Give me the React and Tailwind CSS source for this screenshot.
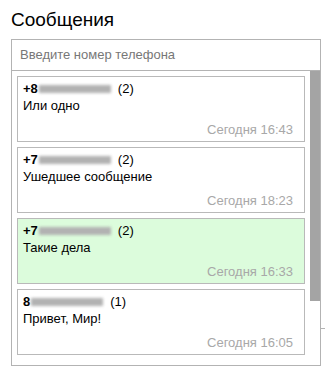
import React from "react";

const cards = [
  { prefix: "+8", count: "(2)", text: "Или одно", time: "Сегодня 16:43", green: false },
  { prefix: "+7", count: "(2)", text: "Ушедшее сообщение", time: "Сегодня 18:23", green: false },
  { prefix: "+7", count: "(2)", text: "Такие дела", time: "Сегодня 16:33", green: true },
  { prefix: "8", count: "(1)", text: "Привет, Мир!", time: "Сегодня 16:05", green: false },
];

function Card({ c }) {
  return (
    <div
      className={`h-[66px] shrink-0 border border-[#b9b9b9] pl-[5px] pr-[11px] pt-[3px] text-[13px] leading-[17px] text-black ${
        c.green ? "bg-[#dcfcdc]" : "bg-white"
      }`}
    >
      <div className="flex items-center whitespace-nowrap">
        <span className="font-bold">{c.prefix}</span>
        <span
          aria-hidden="true"
          className="ml-[1px] inline-block h-[8px] w-[72px] bg-[#b2b2b2] blur-[1.5px]"
        />
        <span className="ml-[7px]">{c.count}</span>
      </div>
      <div>{c.text}</div>
      <div className="mt-[7px] text-right text-[#a8a8a8]">{c.time}</div>
    </div>
  );
}

export default function App() {
  return (
    <div
      className="h-[375px] w-[325px] overflow-hidden bg-white pl-[11px]"
      style={{ fontFamily: '"Liberation Sans", Arial, sans-serif' }}
    >
      <h1 className="pt-[8px] text-[19px] leading-[24px] font-normal text-black">Сообщения</h1>
      <div className="mt-[7px] flex">
        <div className="w-[309px] border-l border-t border-b border-[#b3b3b3]">
          <div className="flex h-[31px] items-center border-b border-[#b3b3b3] pl-[8px] text-[13px] text-[#777777]">
            Введите номер телефона
          </div>
          <div className="flex h-[287px] overflow-hidden">
            <div className="flex w-[298px] flex-col gap-[5px] overflow-hidden pl-[5px] pr-[5px] pt-[5px]">
              {cards.map((c, i) => (
                <Card key={i} c={c} />
              ))}
            </div>
            <div className="w-[10px]">
              <div className="h-[230px] w-[10px] bg-[#a4a4a4]" />
            </div>
          </div>
        </div>
        <div className="flex h-[327px] w-[5px] flex-col border-l border-[#b3b3b3]">
          <div className="h-[289px]" />
          <div className="border-t border-[#b3b3b3]" />
        </div>
      </div>
    </div>
  );
}
